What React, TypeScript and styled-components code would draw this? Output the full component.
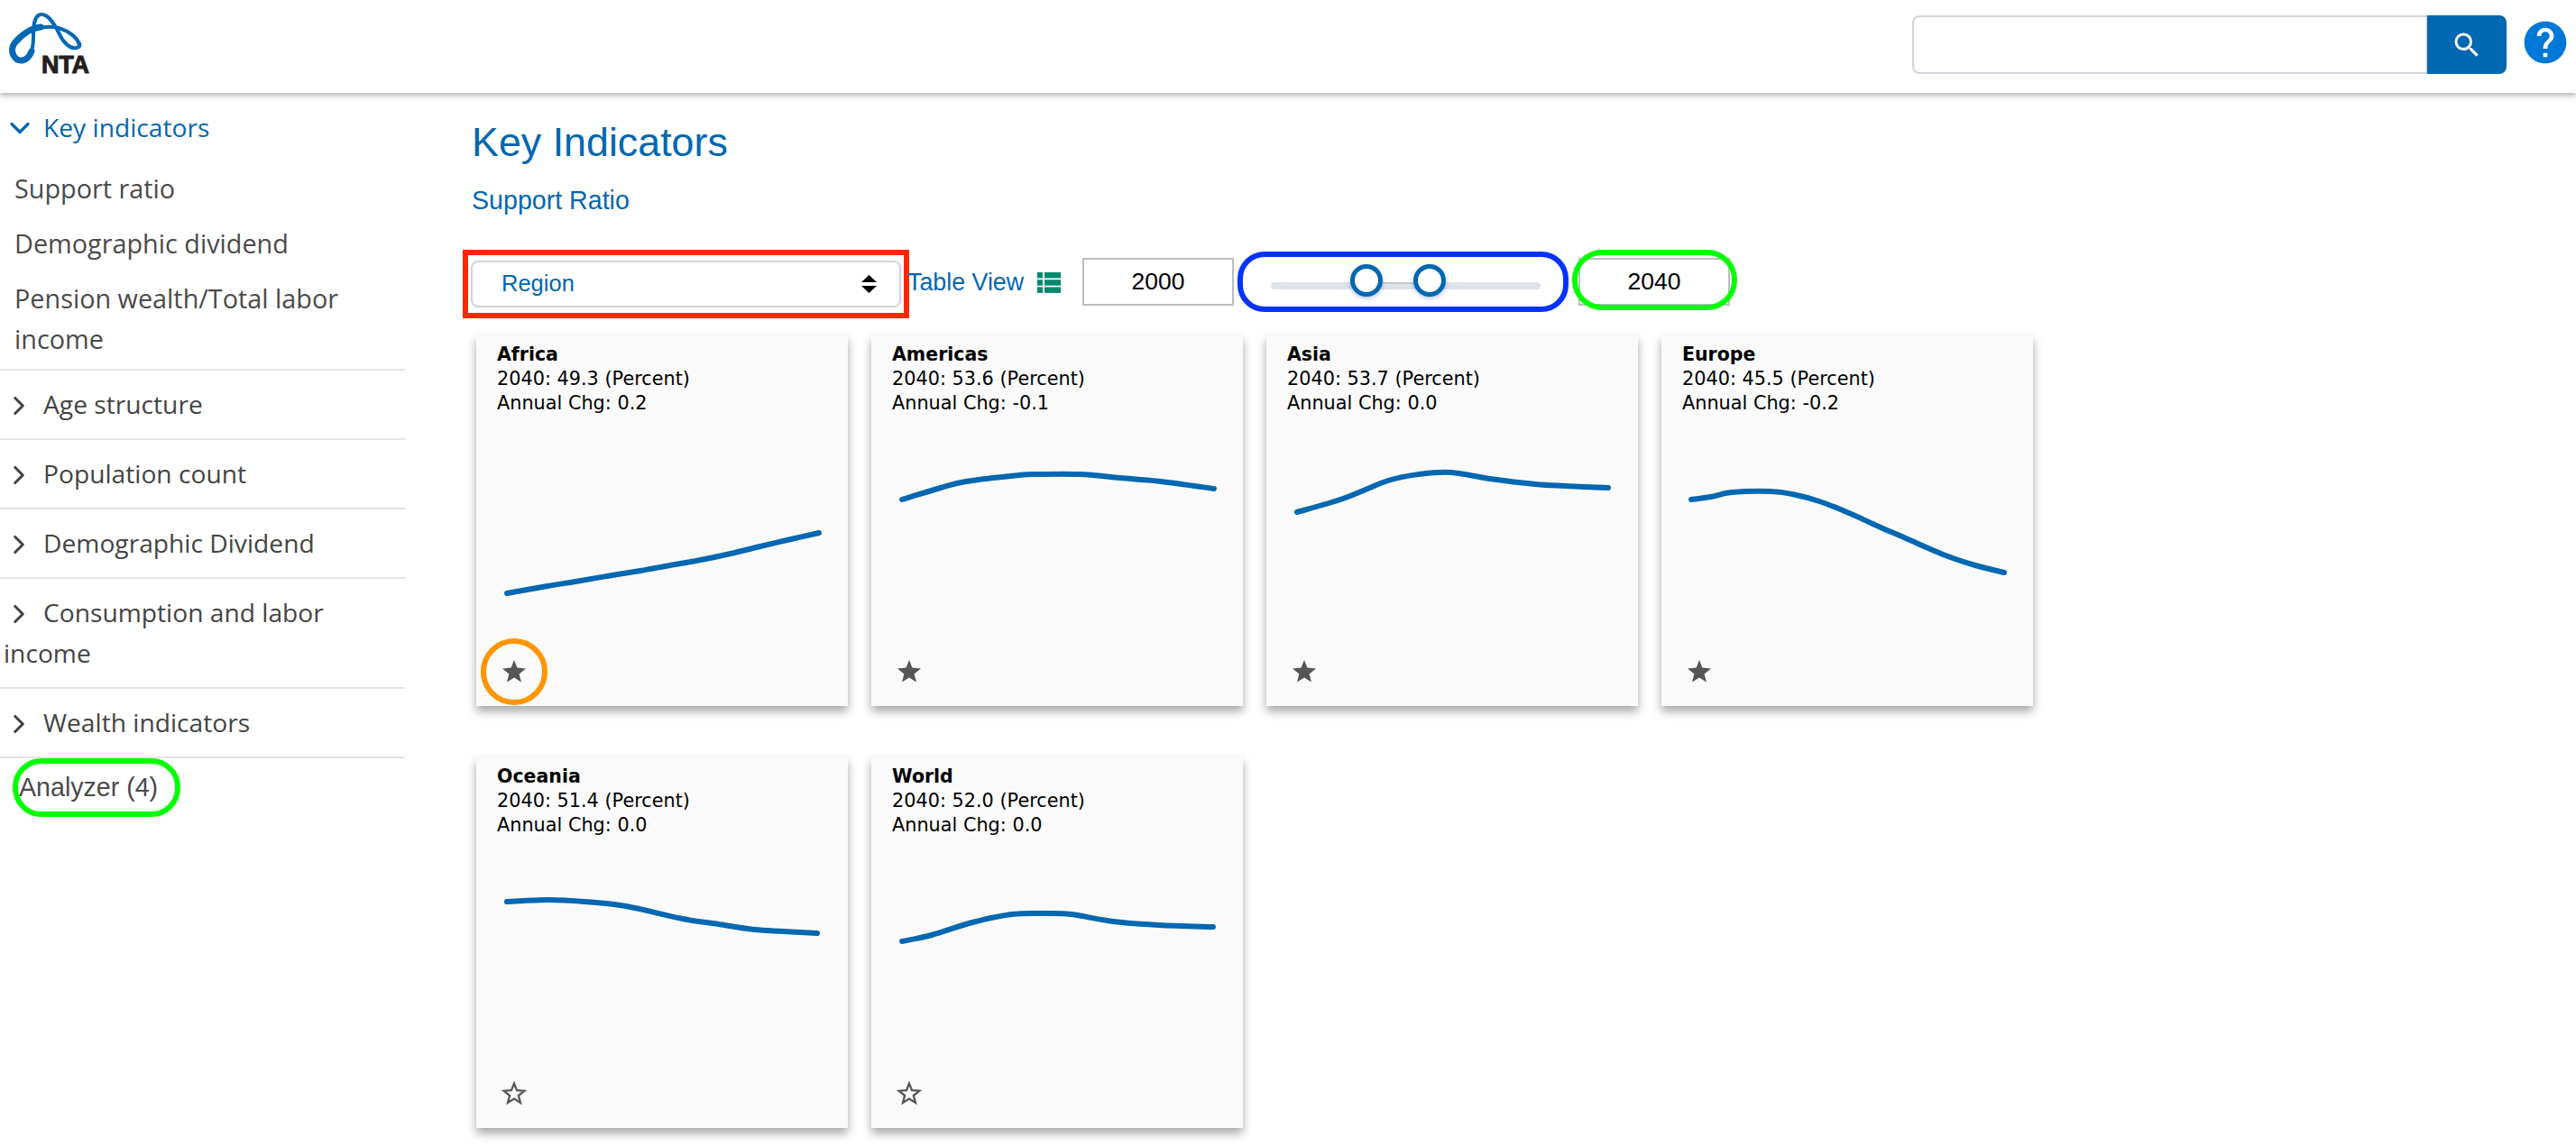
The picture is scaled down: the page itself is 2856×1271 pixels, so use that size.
import React from "react";
import styled, { createGlobalStyle } from "styled-components";
import { ChevronDown, ChevronRight } from "lucide-react";
import { MdHelp, MdSearch } from "react-icons/md";

const GlobalStyle = createGlobalStyle`
  html, body {
    margin: 0;
    padding: 0;
    background: #fff;
  }
  * {
    box-sizing: border-box;
  }
`;

const BLUE = "#0067b1";
const SANS = `"Liberation Sans", Arial, sans-serif`;
const OPEN = `"Open Sans", sans-serif`;

const Page = styled.div`
  width: 2856px;
  height: 1271px;
  overflow: hidden;
  position: relative;
`;

const Header = styled.header`
  height: 103px;
  display: flex;
  align-items: flex-start;
  justify-content: space-between;
  box-shadow: 0 3px 6px rgba(0, 0, 0, 0.3);
  position: relative;
`;

const LogoWrap = styled.div`
  position: relative;
  width: 120px;
  height: 90px;
`;

const LogoText = styled.span`
  position: absolute;
  left: 46px;
  top: 58px;
  font: 900 27px/28px ${SANS};
  letter-spacing: -0.2px;
  color: #231f20;
  -webkit-text-stroke: 1px #231f20;
`;

const SearchArea = styled.div`
  display: flex;
  align-items: flex-start;
  padding: 17px 6px 0 0;
`;

const SearchInput = styled.input`
  width: 571px;
  height: 65px;
  border: 2px solid #ced4da;
  border-right-width: 1px;
  border-radius: 8px 0 0 8px;
  outline: none;
  background: #fff;
`;

const SearchButton = styled.button`
  width: 88px;
  height: 65px;
  border: none;
  border-radius: 0 8px 8px 0;
  background: ${BLUE};
  color: #fff;
  display: flex;
  align-items: center;
  justify-content: center;
  padding: 0;
`;

const HelpIcon = styled(MdHelp)`
  margin: 0 0 0 15px;
  color: #0078d7;
  display: block;
  position: relative;
  top: 2px;
`;

const Body = styled.div`
  display: flex;
  align-items: flex-start;
`;

const Sidebar = styled.nav`
  width: 449px;
  flex: none;
  font: 400 28.2px/45px ${OPEN};
  color: #444;
`;

const GroupHead = styled.div<{ $open?: boolean }>`
  padding: ${(p) => (p.$open ? "16px 0 0 4px" : "15px 40px 15px 4px")};
  color: ${(p) => (p.$open ? BLUE : "#444")};
  border-bottom: ${(p) => (p.$open ? "none" : "2px solid #e4e4e4")};

  svg {
    display: inline-block;
    vertical-align: -8px;
    margin-right: ${(p) => (p.$open ? "8px" : "10px")};
  }
`;

const SubList = styled.div`
  padding: 22px 40px 11px 16px;
  display: flex;
  flex-direction: column;
  gap: 16px;
  border-bottom: 2px solid #e4e4e4;
  font-size: 28.8px;
`;

const SubItem = styled.div`
  color: #4a4a4a;
`;

const Analyzer = styled.div`
  display: inline-block;
  margin: 0 0 0 14px;
  width: 186px;
  height: 65px;
  padding-left: 1px;
  border: 6px solid #00ff00;
  border-radius: 32px;
  font: 400 28.6px/53px ${SANS};
  color: #4a4a4a;
  white-space: nowrap;
`;

const Main = styled.main`
  flex: 1;
  padding-left: 64px;
`;

const Title = styled.h1`
  margin: 29px 0 0 10px;
  font: 400 44.8px/50px ${SANS};
  color: ${BLUE};
`;

const Subtitle = styled.div`
  margin: 22px 0 0 10px;
  font: 400 28.6px/36px ${SANS};
  color: ${BLUE};
`;

const Toolbar = styled.div`
  margin-top: 37px;
  height: 76px;
  display: flex;
  align-items: flex-start;
`;

const RedFrame = styled.div`
  width: 495px;
  height: 76px;
  border: 6px solid #ff2600;
  padding: 6px 3px;
`;

const SelectBox = styled.div`
  height: 52px;
  border: 2px solid #ced4da;
  border-radius: 8px;
  padding: 0 25px 0 32px;
  display: flex;
  align-items: center;
  justify-content: space-between;
  font: 400 25.5px/1 ${SANS};
  color: ${BLUE};
`;

const TableView = styled.div`
  margin: 21px 0 0 -2px;
  width: 194px;
  display: flex;
  align-items: center;
  gap: 15px;
  font: 400 26.8px/30px ${SANS};
  color: ${BLUE};
`;

const YearInput = styled.input`
  margin-top: 9px;
  width: 168px;
  height: 53px;
  border: 2px solid #bdbdbd;
  background: #fff;
  text-align: center;
  font: 400 26.5px/1 ${SANS};
  color: #000;
  outline: none;
  padding: 0;
`;

const SliderFrame = styled.div`
  margin: 2px 0 0 4px;
  width: 367px;
  height: 67px;
  border: 6px solid #0433ff;
  border-radius: 30px;
  position: relative;
`;

const Track = styled.div`
  position: absolute;
  left: 31px;
  right: 25px;
  top: 28px;
  height: 8px;
  border-radius: 4px;
  background: #dee2ea;
`;

const TrackRange = styled.div`
  position: absolute;
  height: 2px;
  top: 0;
  background: #c8c8c8;
`;

const Thumb = styled.div`
  position: absolute;
  top: 8px;
  width: 36px;
  height: 36px;
  border-radius: 50%;
  border: 5px solid ${BLUE};
  background: #fff;
  box-shadow: 0 2px 5px rgba(60, 80, 200, 0.35);
`;

const YearWrap = styled.div`
  position: relative;
  margin-left: 11px;
  display: flex;
`;

const GreenPill = styled.div`
  position: absolute;
  left: -7px;
  top: 0;
  width: 183px;
  height: 67px;
  border: 6px solid #00ff00;
  border-radius: 33px;
  pointer-events: none;
`;

const CardGrid = styled.div`
  margin: 18px 0 0 15px;
  display: grid;
  grid-template-columns: repeat(4, 412px);
  column-gap: 26px;
  row-gap: 56px;
`;

const Card = styled.article`
  width: 412px;
  height: 412px;
  position: relative;
  background: #fafafa;
  box-shadow: 0 6px 10px rgba(0, 0, 0, 0.35);
  padding: 9px 0 0 23px;
`;

const CardHead = styled.div`
  height: 81px;
  font: 400 20.8px/27px "DejaVu Sans", sans-serif;
  color: #000;
`;

const CardName = styled.div`
  font-size: 20.5px;
  font-weight: 700;
`;

const Chart = styled.svg`
  display: block;
  margin-left: -23px;
  width: 412px;
  height: 240px;
`;

const StarSlot = styled.div`
  margin: 31px 0 0 6px;
  width: 26px;
  height: 25px;
  position: relative;
`;

const StarIcon = styled.svg`
  display: block;
  overflow: visible;
`;

const OrangeRing = styled.div`
  position: absolute;
  left: -24px;
  top: -24px;
  width: 74px;
  height: 74px;
  border: 6px solid #ff9500;
  border-radius: 50%;
`;

type Region = {
  name: string;
  value: string;
  chg: string;
  starred: boolean;
  points: [number, number][];
};

const regions: Region[] = [
  {
    name: "Africa",
    value: "49.3",
    chg: "0.2",
    starred: true,
    points: [[34, 287], [79, 279], [110, 274], [145, 268], [182, 262], [215, 256], [249, 250], [282, 243], [315, 235], [349, 227], [380, 220]],
  },
  {
    name: "Americas",
    value: "53.6",
    chg: "-0.1",
    starred: true,
    points: [[34, 183], [77, 170], [105, 163], [164, 156], [186, 155], [231, 155], [276, 159], [321, 163], [380, 171]],
  },
  {
    name: "Asia",
    value: "53.7",
    chg: "0.0",
    starred: true,
    points: [[34, 197], [85, 182], [135, 162], [169, 155], [205, 153], [248, 160], [298, 166], [332, 168], [379, 170]],
  },
  {
    name: "Europe",
    value: "45.5",
    chg: "-0.2",
    starred: true,
    points: [[33, 183], [55, 180], [78, 175], [121, 174], [145, 177], [175, 185], [208, 198], [241, 213], [271, 226], [315, 245], [348, 256], [380, 264]],
  },
  {
    name: "Oceania",
    value: "51.4",
    chg: "0.0",
    starred: false,
    points: [[34, 161], [80, 159], [120, 161], [166, 166], [229, 180], [269, 186], [309, 192], [378, 196]],
  },
  {
    name: "World",
    value: "52.0",
    chg: "0.0",
    starred: false,
    points: [[34, 205], [67, 198], [112, 184], [156, 175], [193, 174], [222, 175], [268, 183], [319, 187], [379, 189]],
  },
];

// catmull-rom through the points so the lines don't look faceted
const toPath = (pts: [number, number][]) => {
  let d = `M${pts[0][0]} ${pts[0][1]}`;
  for (let i = 0; i < pts.length - 1; i++) {
    const p0 = pts[Math.max(i - 1, 0)];
    const p1 = pts[i];
    const p2 = pts[i + 1];
    const p3 = pts[Math.min(i + 2, pts.length - 1)];
    const c1x = p1[0] + (p2[0] - p0[0]) / 6;
    const c1y = p1[1] + (p2[1] - p0[1]) / 6;
    const c2x = p2[0] - (p3[0] - p1[0]) / 6;
    const c2y = p2[1] - (p3[1] - p1[1]) / 6;
    d += ` C${c1x} ${c1y} ${c2x} ${c2y} ${p2[0]} ${p2[1]}`;
  }
  return d;
};

const STAR = "13,0 16.4,8.6 26,9.4 18.6,15.4 21,24.5 13,19.5 5,24.5 7.4,15.4 0,9.4 9.6,8.6";

const Star = ({ filled }: { filled: boolean }) => (
  <StarIcon width="26" height="25" viewBox={filled ? "0 0 26 25" : "-1.8 -1.8 29.6 28.6"}>
    <polygon
      points={STAR}
      fill={filled ? "#555" : "none"}
      stroke="#555"
      strokeWidth={filled ? 0 : 2.6}
    />
  </StarIcon>
);

const Logo = () => (
  <LogoWrap>
    <svg width="120" height="90" viewBox="0 0 120 90">
      <g fill="none" stroke="#0069b4" strokeLinecap="round">
        <path
          d="M88 50 C86 40 72 32 60 30 C45 28 25 36 16 48 C9 58 16 69 25 67 C35 65 37 52 37 40 C37 28 38 16 46 16 C54 16 60 26 66 38 C70 47 78 55 85 53 C89 52 89 50 88 48"
          strokeWidth="4"
        />
        <path d="M45 30 C35 31 24 38 16 48 C10 57 16 68 25 67 C30 66 33 62 35 57" strokeWidth="7" />
      </g>
    </svg>
    <LogoText>NTA</LogoText>
  </LogoWrap>
);

const TableIcon = () => (
  <svg width="26" height="23" viewBox="0 0 26 23">
    <g fill="#00896e">
      <rect x="0" y="0" width="6" height="6.5" />
      <rect x="8" y="0" width="18" height="6.5" />
      <rect x="0" y="8.2" width="6" height="6.5" />
      <rect x="8" y="8.2" width="18" height="6.5" />
      <rect x="0" y="16.4" width="6" height="6.5" />
      <rect x="8" y="16.4" width="18" height="6.5" />
    </g>
  </svg>
);

const SortArrows = () => (
  <svg width="17" height="20" viewBox="0 0 17 20">
    <path d="M8.5 0 L17 8 H0 Z M0 12 H17 L8.5 20 Z" fill="#000" />
  </svg>
);

const groups = ["Age structure", "Population count", "Demographic Dividend", "Consumption and labor income", "Wealth indicators"];

export default function App() {
  return (
    <Page>
      <GlobalStyle />
      <Header>
        <Logo />
        <SearchArea>
          <SearchInput />
          <SearchButton>
            <MdSearch size={36} />
          </SearchButton>
          <HelpIcon size={56} />
        </SearchArea>
      </Header>
      <Body>
        <Sidebar>
          <GroupHead $open>
            <ChevronDown size={36} strokeWidth={2.2} />
            Key indicators
          </GroupHead>
          <SubList>
            <SubItem>Support ratio</SubItem>
            <SubItem>Demographic dividend</SubItem>
            <SubItem>Pension wealth/Total labor income</SubItem>
          </SubList>
          {groups.map((g) => (
            <GroupHead key={g}>
              <ChevronRight size={34} strokeWidth={2.2} />
              {g}
            </GroupHead>
          ))}
          <Analyzer>Analyzer (4)</Analyzer>
        </Sidebar>
        <Main>
          <Title>Key Indicators</Title>
          <Subtitle>Support Ratio</Subtitle>
          <Toolbar>
            <RedFrame>
              <SelectBox>
                Region
                <SortArrows />
              </SelectBox>
            </RedFrame>
            <TableView>
              Table View
              <TableIcon />
            </TableView>
            <YearInput defaultValue="2000" />
            <SliderFrame>
              <Track>
                <TrackRange style={{ left: 106, width: 70 }} />
              </Track>
              <Thumb style={{ left: 119 }} />
              <Thumb style={{ left: 189 }} />
            </SliderFrame>
            <YearWrap>
              <YearInput defaultValue="2040" />
              <GreenPill />
            </YearWrap>
          </Toolbar>
          <CardGrid>
            {regions.map((r, i) => (
              <Card key={r.name}>
                <CardHead>
                  <CardName>{r.name}</CardName>
                  <div>2040: {r.value} (Percent)</div>
                  <div>Annual Chg: {r.chg}</div>
                </CardHead>
                <Chart viewBox="0 90 412 240">
                  <path d={toPath(r.points)} fill="none" stroke={BLUE} strokeWidth="6" strokeLinecap="round" strokeLinejoin="round" />
                </Chart>
                <StarSlot>
                  <Star filled={r.starred} />
                  {i === 0 && <OrangeRing />}
                </StarSlot>
              </Card>
            ))}
          </CardGrid>
        </Main>
      </Body>
    </Page>
  );
}
